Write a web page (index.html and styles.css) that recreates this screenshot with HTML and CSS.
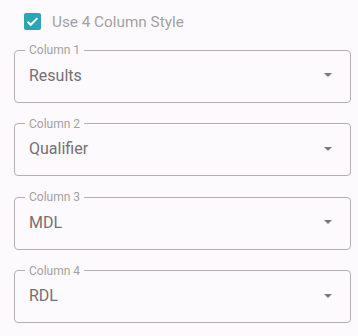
FILE: index.html
```html
<!DOCTYPE html>
<html lang="en">
<head>
  <meta charset="UTF-8">
  <title>Column Settings</title>
  <link rel="stylesheet" href="styles.css">
</head>
<body>

  <div class="panel">
    <label class="check-row">
      <span class="checkbox">
        <svg viewBox="0 0 17 17" width="17" height="17">
          <path d="M3.6 8.7l3.1 3.1 6.7-6.7" fill="none" stroke="#fff" stroke-width="2"/>
        </svg>
      </span>
      <span class="check-label">Use 4 Column Style</span>
    </label>

    <fieldset class="field">
      <legend>Column 1</legend>
      <div class="field-value">
        <span>Results</span>
        <span class="arrow"></span>
      </div>
    </fieldset>

    <fieldset class="field">
      <legend>Column 2</legend>
      <div class="field-value">
        <span>Qualifier</span>
        <span class="arrow"></span>
      </div>
    </fieldset>

    <fieldset class="field">
      <legend>Column 3</legend>
      <div class="field-value">
        <span>MDL</span>
        <span class="arrow"></span>
      </div>
    </fieldset>

    <fieldset class="field">
      <legend>Column 4</legend>
      <div class="field-value">
        <span>RDL</span>
        <span class="arrow"></span>
      </div>
    </fieldset>
  </div>

</body>
</html>
```

FILE: styles.css
```css
body {
  margin: 0;
  background-color: #fdfafd;
  font-family: Roboto, "Noto Sans", Arial, sans-serif;
}
.panel {
  padding: 13px 7px 0 14px;
  display: flex;
  flex-direction: column;
  gap: 15px;
}
.check-row {
  display: flex;
  align-items: center;
  gap: 11px;
  padding-left: 10px;
  height: 17px;
  margin-bottom: -1px;
}
.checkbox {
  width: 17px;
  height: 17px;
  border-radius: 2px;
  background-color: #2ba6b4;
  display: flex;
}
.check-label {
  font-size: 15.3px;
  color: #a3a0a3;
}
.field {
  margin: 0;
  padding: 0 18px 0 14px;
  height: 58.5px;
  box-sizing: border-box;
  border: 1px solid #b3afb3;
  border-radius: 4px;
  min-width: 0;
}
.field legend {
  margin-left: -4px;
  padding: 0 4px;
  font-size: 12px;
  line-height: 12px;
  color: #a3a0a3;
}
.field-value {
  display: flex;
  align-items: center;
  justify-content: space-between;
  height: 36px;
  margin-top: 1px;
  font-size: 16px;
  color: #747074;
}
.arrow {
  width: 0;
  height: 0;
  border-left: 4px solid transparent;
  border-right: 4px solid transparent;
  border-top: 4.5px solid #7a767a;
}
```
